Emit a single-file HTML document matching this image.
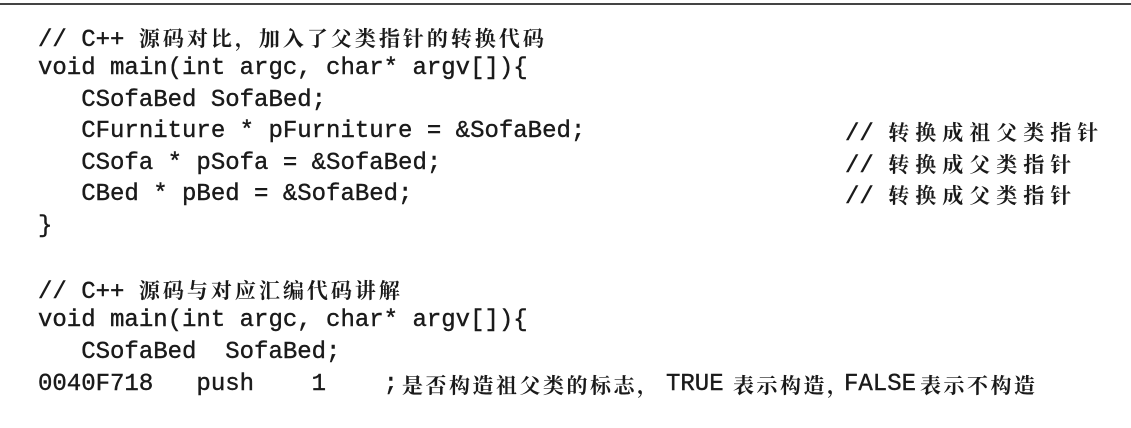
<!DOCTYPE html>
<html><head><meta charset="utf-8"><style>
body{margin:0;width:1131px;height:428px;background:#fff;position:relative;overflow:hidden;font-family:"Liberation Mono","Noto Serif CJK SC",monospace;color:#1a1a1a;}
.top{position:absolute;left:0;top:3px;width:1131px;height:2px;background:#444;}
.l{position:absolute;font-size:24px;white-space:pre;line-height:32px;height:32px;-webkit-text-stroke:0.4px #1a1a1a;}
.c{font-family:"Noto Serif CJK SC","Noto Sans CJK SC",serif;font-size:21px;font-weight:bold;letter-spacing:3px;-webkit-text-stroke:0;}
.r{font-family:"Noto Serif CJK SC","Noto Sans CJK SC",serif;font-size:21px;font-weight:bold;letter-spacing:2.5px;-webkit-text-stroke:0;}
.rr{font-family:"Noto Serif CJK SC","Noto Sans CJK SC",serif;font-size:21px;font-weight:bold;letter-spacing:6px;-webkit-text-stroke:0;}
</style></head><body>
<div class="top"></div>
<div class="l" style="left:38px;top:22px">// C++ <span class="c">源码对比，加入了父类指针的转换代码</span></div>
<div class="l" style="left:38px;top:53px">void main(int argc, char* argv[]){</div>
<div class="l" style="left:38px;top:85px">   CSofaBed SofaBed;</div>
<div class="l" style="left:38px;top:116px">   CFurniture * pFurniture = &amp;SofaBed;</div>
<div class="l" style="left:38px;top:148px">   CSofa * pSofa = &amp;SofaBed;</div>
<div class="l" style="left:38px;top:179px">   CBed * pBed = &amp;SofaBed;</div>
<div class="l" style="left:38px;top:211px">}</div>
<div class="l" style="left:845px;top:116px">// <span class="rr">转换成祖父类指针</span></div>
<div class="l" style="left:845px;top:148px">// <span class="rr">转换成父类指针</span></div>
<div class="l" style="left:845px;top:179px">// <span class="rr">转换成父类指针</span></div>
<div class="l" style="left:38px;top:274px">// C++ <span class="c">源码与对应汇编代码讲解</span></div>
<div class="l" style="left:38px;top:305px">void main(int argc, char* argv[]){</div>
<div class="l" style="left:38px;top:337px">   CSofaBed  SofaBed;</div>
<div class="l" style="left:38px;top:369px">0040F718   push    1    ;</div>
<div class="l" style="left:402px;top:369px"><span class="r">是否构造祖父类的标志，</span></div>
<div class="l" style="left:666px;top:369px">TRUE</div>
<div class="l" style="left:733px;top:369px"><span class="r">表示构造，</span></div>
<div class="l" style="left:844px;top:369px">FALSE</div>
<div class="l" style="left:920px;top:369px"><span class="r">表示不构造</span></div>
</body></html>
